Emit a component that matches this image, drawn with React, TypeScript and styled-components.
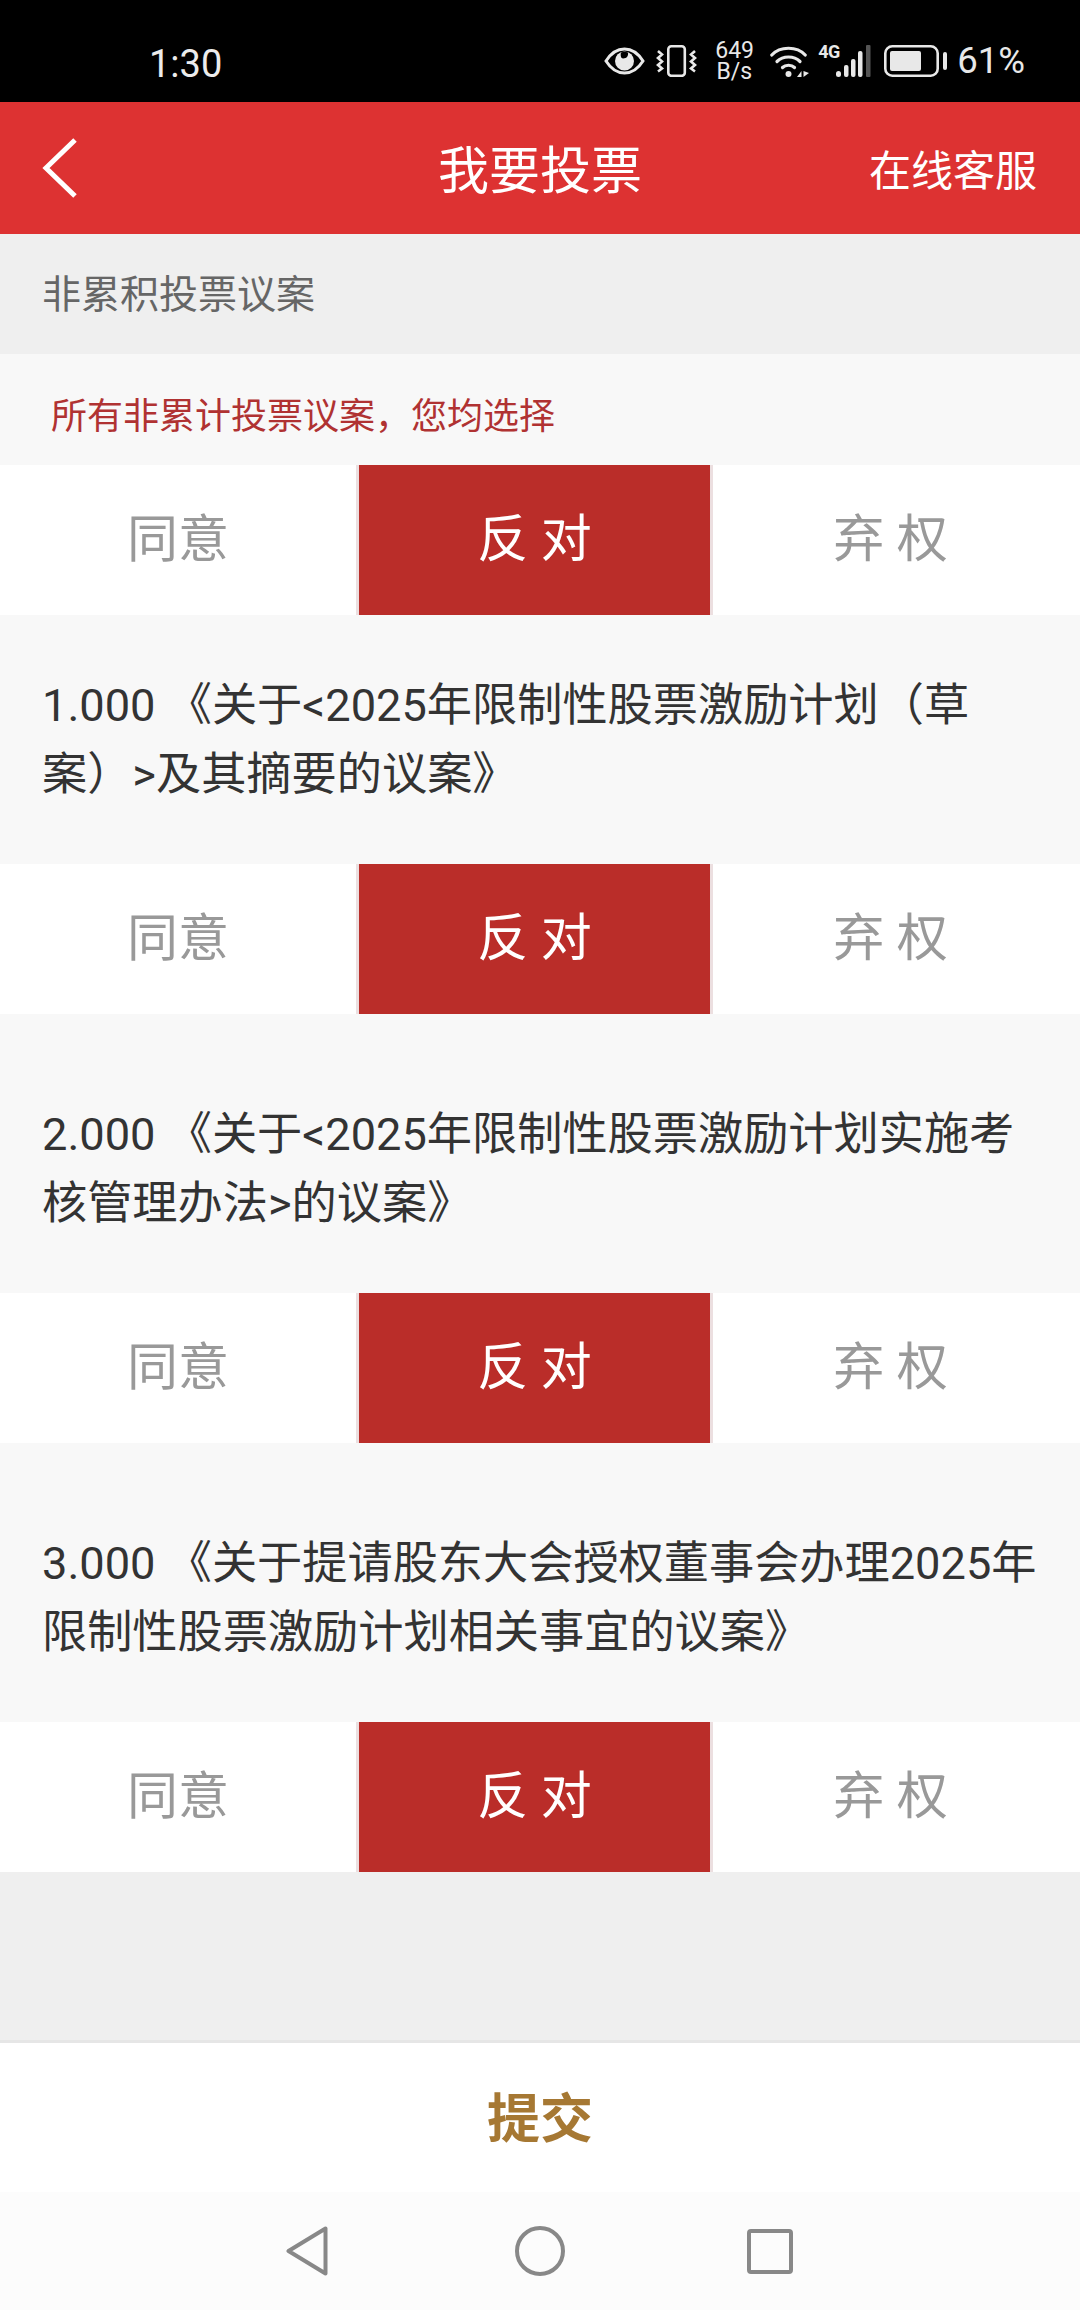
import styled, { createGlobalStyle } from 'styled-components'

const GlobalStyle = createGlobalStyle`
  html, body {
    margin: 0;
    padding: 0;
    background: #efefef;
  }
  * {
    box-sizing: border-box;
  }
`

const fontStack = `Roboto, 'Noto Sans CJK SC', sans-serif`

const Page = styled.div`
  width: 1080px;
  height: 2310px;
  display: flex;
  flex-flow: column nowrap;
  background: #efefef;
  font-family: ${fontStack};
  overflow: hidden;
`

const StatusBar = styled.div`
  height: 102px;
  flex: none;
  background: #000;
  color: #e8e8e8;
  display: flex;
  align-items: center;
  padding: 20px 55px 0 149px;
`

const Clock = styled.div`
  font-size: 38px;
  margin-right: auto;
  padding-top: 6px;
  color: #ececec;
`

const StatusIcons = styled.div`
  display: flex;
  align-items: center;
`

const Vibrate = styled.svg`
  margin-left: 11px;
`

const Speed = styled.div`
  width: 38px;
  margin: 0 17px 0 18px;
  font-size: 23px;
  line-height: 21px;
  text-align: center;
  white-space: nowrap;
`

const Percent = styled.div`
  margin-left: 10px;
  font-size: 36.5px;
  line-height: 40px;
  white-space: nowrap;
`

const SignalWrap = styled.div`
  display: flex;
  align-items: flex-end;
  margin: 0 13px 0 8px;
  height: 32px;
`

const NetLabel = styled.div`
  width: 18px;
  font-size: 18px;
  line-height: 14px;
  font-weight: 700;
  align-self: flex-start;
  white-space: nowrap;
  letter-spacing: -0.5px;
`

const Header = styled.div`
  height: 132px;
  flex: none;
  background: #dd3232;
  color: #fff;
  display: grid;
  grid-template-columns: 1fr auto 1fr;
  align-items: center;
`

const BackButton = styled.div`
  padding-left: 42px;
  display: flex;
  align-items: center;
`

const Title = styled.div`
  font-size: 51px;
  padding-bottom: 2px;
`

const HeaderLink = styled.div`
  font-size: 42px;
  text-align: right;
  padding: 0 43px 2px 0;
`

const SectionTitle = styled.div`
  height: 120px;
  flex: none;
  padding: 0 0 6px 42px;
  display: flex;
  align-items: center;
  font-size: 39px;
  color: #666;
`

const Notice = styled.div`
  height: 111px;
  flex: none;
  background: #f8f8f8;
  padding: 6px 0 0 51px;
  display: flex;
  align-items: center;
  font-size: 36px;
  color: #b03232;
`

const MotionBlock = styled.div<{ $height: number; $top: number }>`
  height: ${(props) => props.$height}px;
  background: #f8f8f8;
  padding: ${(props) => props.$top}px 40px 0 42px;
  display: flex;
  align-items: center;
`

const MotionText = styled.div`
  width: 100%;
  font-size: 45.2px;
  line-height: 69px;
  color: #333;
  text-spacing-trim: space-all;
`

const Choices = styled.div`
  height: 150px;
  flex: none;
  background: #fff;
  display: grid;
  grid-template-columns: 356px 357px 1fr;
`

const Choice = styled.div<{ $active?: boolean; $last?: boolean }>`
  display: flex;
  align-items: center;
  justify-content: center;
  font-size: 51px;
  padding: 0 ${(props) => (props.$last ? 12 : 0)}px 10px 0;
  color: ${(props) => (props.$active ? '#fff' : '#999')};
  background: ${(props) => (props.$active ? '#ba2d29' : '#fff')};
  border: ${(props) => (props.$active ? '0 solid #ecdfe0' : 'none')};
  border-width: ${(props) => (props.$active ? '0 3px' : '0')};
`

const Spacer = styled.div`
  flex: 1;
`

const SubmitBar = styled.div`
  height: 152px;
  flex: none;
  background: #fff;
  border-top: 3px solid #e6e6e6;
  display: flex;
  align-items: center;
  justify-content: center;
  font-size: 53px;
  font-weight: 700;
  color: #a67833;
  padding-bottom: 5px;
`

const NavBar = styled.div`
  height: 118px;
  flex: none;
  background: #fcfcfc;
  display: flex;
  align-items: center;
  padding-left: 286px;
`

const NavSlot = styled.div<{ $gap: number }>`
  margin-right: ${(props) => props.$gap}px;
  display: flex;
`

const noticeText = '所有非累计投票议案\uFF0C您均选择'

const motions = [
  { text: '1.000 《关于<2025年限制性股票激励计划\uFF08草案\uFF09>及其摘要的议案》', height: 249, top: 0 },
  { text: '2.000 《关于<2025年限制性股票激励计划实施考核管理办法>的议案》', height: 279, top: 30 },
  { text: '3.000 《关于提请股东大会授权董事会办理2025年限制性股票激励计划相关事宜的议案》', height: 279, top: 30 },
]

function ChoiceRow() {
  return (
    <Choices>
      <Choice>同意</Choice>
      <Choice $active>反 对</Choice>
      <Choice $last>弃 权</Choice>
    </Choices>
  )
}

function EyeIcon() {
  return (
    <svg width="41" height="28" viewBox="0 0 41 28" fill="none">
      <path d="M2 14C7 6 13 2 20.5 2S34 6 39 14c-5 8-11 12-18.500 12S7 22 2 14z" stroke="#e8e8e8" strokeWidth="3" />
      <circle cx="20.5" cy="14" r="9.500" fill="#e8e8e8" />
      <path d="M17 5.500a9 9 0 0 1 7 0c.5 3-1 6-5 6-2 0-2.800-3-2-6z" fill="#000" />
    </svg>
  )
}

function VibrateIcon() {
  return (
    <Vibrate width="41" height="32" viewBox="0 0 41 32" fill="none" stroke="#e8e8e8">
      <rect x="12.300" y="1.300" width="16.500" height="29.500" rx="3" strokeWidth="2.600" />
      <path d="M2 6l4 3.500-4 3.500 4 3.500-4 3.500 4 3.500-4 3M39 6l-4 3.500 4 3.500-4 3.500 4 3.500-4 3.500 4 3" strokeWidth="2.600" />
    </Vibrate>
  )
}

function WifiIcon() {
  return (
    <svg width="40" height="31" viewBox="0 0 40 31" fill="none">
      <g stroke="#e8e8e8" strokeWidth="3.200" strokeLinecap="round">
        <path d="M1.800 9C10 0 27 0 35.200 9" />
        <path d="M7 15.500C13 9.500 24 9.500 30 15.500" />
        <path d="M12.500 21.500C15.500 18.500 21.500 18.500 24.500 21.500" />
      </g>
      <circle cx="18.500" cy="28" r="3" fill="#e8e8e8" />
      <path d="M31.500 31V25l-4.500 6zM33.500 25v6l5.500-4z" fill="#e8e8e8" />
    </svg>
  )
}

function SignalIcon() {
  return (
    <svg width="35" height="32" viewBox="0 0 35 32" fill="#e8e8e8">
      <rect x="0" y="26" width="5" height="6" rx="2.500" />
      <rect x="8" y="20" width="4.500" height="12" rx="2" />
      <rect x="15" y="14" width="4.500" height="18" rx="2" />
      <rect x="22" y="6" width="4.500" height="26" rx="2" />
      <rect x="30" y="0" width="4.500" height="32" rx="1" fill="#555" />
    </svg>
  )
}

function BatteryIcon() {
  return (
    <svg width="63" height="32" viewBox="0 0 63 32" fill="none">
      <rect x="1.300" y="1.300" width="52.400" height="29.400" rx="7" stroke="#e8e8e8" strokeWidth="2.600" />
      <rect x="6" y="6" width="31" height="20" rx="2" fill="#e8e8e8" />
      <rect x="59" y="7" width="4" height="18" rx="2" fill="#e8e8e8" />
    </svg>
  )
}

export default function App(): React.ReactElement {
  return (
    <Page>
      <GlobalStyle />
      <StatusBar>
        <Clock>1:30</Clock>
        <StatusIcons>
          <EyeIcon />
          <VibrateIcon />
          <Speed>
            649
            <br />
            B/s
          </Speed>
          <WifiIcon />
          <SignalWrap>
            <NetLabel>4G</NetLabel>
            <SignalIcon />
          </SignalWrap>
          <BatteryIcon />
          <Percent>61%</Percent>
        </StatusIcons>
      </StatusBar>
      <Header>
        <BackButton>
          <svg width="36" height="60" viewBox="0 0 36 60" fill="none">
            <path d="M33 2L4 30l29 28" stroke="#fff" strokeWidth="5" />
          </svg>
        </BackButton>
        <Title>我要投票</Title>
        <HeaderLink>在线客服</HeaderLink>
      </Header>
      <SectionTitle>非累积投票议案</SectionTitle>
      <Notice>{noticeText}</Notice>
      <ChoiceRow />
      {motions.map((m) => (
        <div key={m.text}>
          <MotionBlock $height={m.height} $top={m.top}>
            <MotionText>{m.text}</MotionText>
          </MotionBlock>
          <ChoiceRow />
        </div>
      ))}
      <Spacer />
      <SubmitBar>提交</SubmitBar>
      <NavBar>
        <NavSlot $gap={187}>
          <svg width="42" height="50" viewBox="0 0 42 50" fill="none">
            <path d="M39.500 2.500v45L2.500 25z" stroke="#888" strokeWidth="4" strokeLinejoin="round" />
          </svg>
        </NavSlot>
        <NavSlot $gap={182}>
          <svg width="50" height="50" viewBox="0 0 50 50" fill="none">
            <circle cx="25" cy="25" r="23" stroke="#888" strokeWidth="4" />
          </svg>
        </NavSlot>
        <NavSlot $gap={0}>
          <svg width="46" height="45" viewBox="0 0 46 45" fill="none">
            <rect x="2" y="2" width="42" height="41" rx="2" stroke="#888" strokeWidth="4" />
          </svg>
        </NavSlot>
      </NavBar>
    </Page>
  )
}
